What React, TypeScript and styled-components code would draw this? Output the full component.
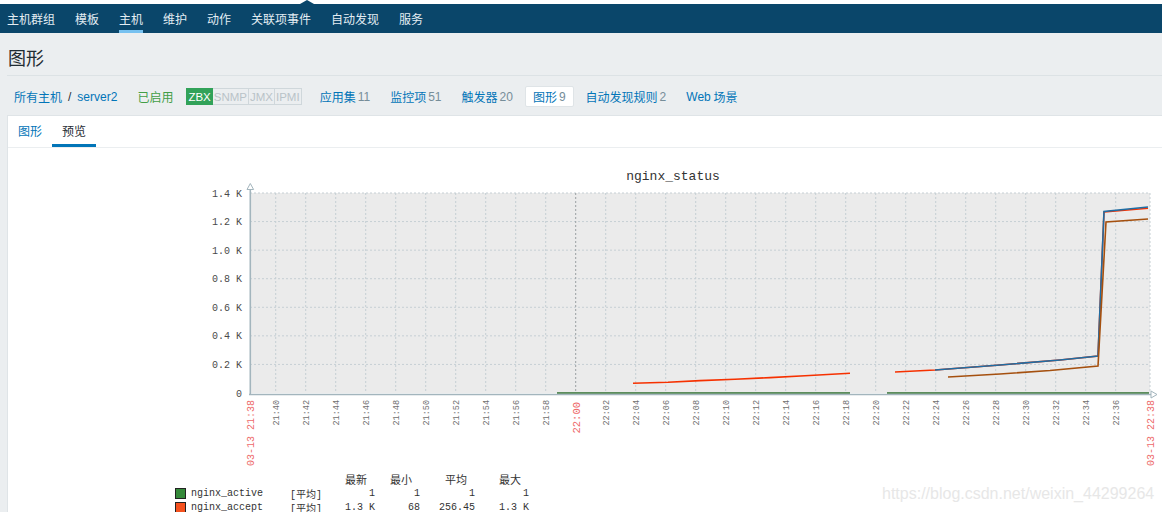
import React from 'react';
import styled, { createGlobalStyle } from 'styled-components';

const GlobalStyle = createGlobalStyle`
  html, body {
    margin: 0;
    padding: 0;
    background: #ebeef0;
    overflow: hidden;
  }
  body {
    font-family: "Liberation Sans", "Noto Sans CJK SC", sans-serif;
    font-size: 12px;
    color: #1f2c33;
  }
`;

const CJK = `"Noto Sans CJK SC", "Liberation Sans", sans-serif`;
const MONO = `"Liberation Mono", "Noto Sans CJK SC", monospace`;

const Page = styled.div`
  position: relative;
  width: 1162px;
  height: 512px;
  overflow: hidden;
`;

const TopStrip = styled.div`
  position: relative;
  height: 4px;
  background: #fff;

  &::after {
    content: '';
    position: absolute;
    left: 300px;
    bottom: 0;
    width: 0;
    height: 0;
    border-left: 7px solid transparent;
    border-right: 7px solid transparent;
    border-bottom: 4px solid #0a466a;
  }
`;

const Nav = styled.nav`
  display: flex;
  gap: 20px;
  height: 29px;
  padding-left: 7px;
  background: #0a466a;
`;

const NavItem = styled.span<{ $active?: boolean }>`
  position: relative;
  line-height: 29px;
  font-family: ${CJK};
  font-size: 12px;
  color: #e3edf3;

  &::after {
    content: '';
    display: ${(p) => (p.$active ? 'block' : 'none')};
    position: absolute;
    left: 0;
    right: 0;
    bottom: 0;
    height: 3px;
    background: #77c1f0;
  }
`;

const Header = styled.header`
  display: flex;
  align-items: center;
  height: 36px;
  padding-top: 6px;
  margin-left: 7px;
  border-bottom: 1px solid #dce2e5;
`;

const Title = styled.h1`
  margin: 0;
  padding-left: 1px;
  font-family: ${CJK};
  font-size: 18px;
  font-weight: normal;
  color: #1f2c33;
`;

const Crumbs = styled.div`
  display: flex;
  align-items: center;
  gap: 6px;
  height: 37px;
  padding: 2px 0 0 7px;
`;

const CrumbItem = styled.div<{ $selected?: boolean }>`
  display: flex;
  align-items: center;
  height: 19px;
  padding: 0 7px;
  background: ${(p) => (p.$selected ? '#fff' : 'transparent')};
  border: 1px solid ${(p) => (p.$selected ? '#dfe4e7' : 'transparent')};
  border-radius: 2px;
  margin: 0 -1px;
`;

const Link = styled.span`
  font-family: ${CJK};
  font-size: 12px;
  color: #0275b8;
`;

const Latin = styled.span`
  font-family: "Liberation Sans", sans-serif;
  font-size: 12px;
  color: #0275b8;
`;

const Sep = styled.span`
  margin: 0 6px;
  color: #1f2c33;
  font-family: "Liberation Sans", sans-serif;
`;

const Status = styled.span`
  font-family: ${CJK};
  font-size: 12px;
  color: #429e47;
`;

const Count = styled.span`
  margin-left: 2px;
  font-family: "Liberation Sans", sans-serif;
  font-size: 12px;
  color: #768d99;
`;

const BadgeGroup = styled.div`
  display: flex;
  padding: 0 5px 0 0;
`;

const Badge = styled.span<{ $on?: boolean }>`
  display: inline-flex;
  align-items: center;
  height: 15px;
  padding: 0 1px;
  border: 1px solid ${(p) => (p.$on ? '#31a259' : '#cfd7db')};
  background: ${(p) => (p.$on ? '#31a259' : 'transparent')};
  color: ${(p) => (p.$on ? '#fff' : '#b9c3c8')};
  font-family: "Liberation Sans", sans-serif;
  font-size: 11.5px;
  & + & {
    border-left: none;
  }
`;

const Content = styled.section`
  margin-left: 7px;
  background: #fff;
  border-top: 1px solid #dfe4e7;
  border-left: 1px solid #dfe4e7;
  height: 400px;
`;

const TabList = styled.div`
  display: flex;
  height: 31px;
  border-bottom: 1px solid #ebeef0;
`;

const Tab = styled.span<{ $active?: boolean }>`
  position: relative;
  display: flex;
  align-items: center;
  padding: 0 10px 3px;
  font-family: ${CJK};
  font-size: 12px;
  color: ${(p) => (p.$active ? '#1f2c33' : '#0275b8')};

  &::after {
    content: '';
    display: ${(p) => (p.$active ? 'block' : 'none')};
    position: absolute;
    left: 0;
    right: 0;
    bottom: 0;
    height: 3px;
    background: #0275b8;
  }
`;

const ChartSvg = styled.svg`
  display: block;
`;

const Legend = styled.div`
  display: grid;
  grid-template-columns: 16px 99px 33px 52px 45px 55px 54px;
  grid-auto-rows: 14px;
  margin-left: 167px;
  font-family: ${MONO};
  font-size: 10px;
  color: #333;
  align-items: center;
`;

const HeadCell = styled.span`
  font-family: ${CJK};
  font-size: 11px;
  text-align: right;
  padding-right: 8px;
`;

const Cell = styled.span<{ $right?: boolean }>`
  text-align: ${(p) => (p.$right ? 'right' : 'left')};
  white-space: pre;
`;

const Swatch = styled.span<{ $color: string }>`
  width: 9px;
  height: 9px;
  border: 1px solid #222;
  background: ${(p) => p.$color};
`;

const Watermark = styled.div`
  position: absolute;
  left: 882px;
  top: 485px;
  font-family: "Liberation Sans", sans-serif;
  font-size: 16px;
  line-height: 18px;
  color: #e7e7e7;
  pointer-events: none;
`;

const PLOT = { left: 250, right: 1150, top: 193, bottom: 393 };
const gridYs = [1400, 1200, 1000, 800, 600, 400, 200].map((v) => PLOT.bottom - (v / 1400) * 200);
const yLabels = ['1.4 K', '1.2 K', '1.0 K', '0.8 K', '0.6 K', '0.4 K', '0.2 K', '0'];
const gridXs = Array.from({ length: 29 }, (_, k) => 275.7 + 30 * k);

const timeLabel = (k: number) => {
  const m = 40 + 2 * k;
  const h = 21 + Math.floor(m / 60);
  return `${h}:${String(m % 60).padStart(2, '0')}`;
};

const series = [
  { color: '#2d6e2d', pts: ['557,393 850,393', '887,393 1149,393'] },
  {
    color: '#f63100',
    pts: [
      '633,383.3 668,382.3 700,380.6 735,379.2 770,377.6 805,375.8 850,373.3',
      '895,372 935,370 1000,365 1060,360 1098,356 1104,212 1148,208.3',
    ],
  },
  { color: '#1f6da3', pts: ['935,370 1000,365 1060,360 1098,356 1104,211.5 1148,207'] },
  { color: '#a5500f', pts: ['948,377 1000,374 1050,370.5 1098,366 1106,222 1148,219'] },
];

const Chart: React.FC = () => (
  <ChartSvg width={1154} height={324} viewBox="8 148 1154 324">
    <text x={673} y={180} textAnchor="middle" fontFamily={MONO} fontSize={13} fill="#333">
      nginx_status
    </text>
    <rect x={PLOT.left} y={PLOT.top} width={900} height={200} fill="#ebebeb" />
    {gridYs.map((y) => (
      <line key={y} x1={PLOT.left} x2={PLOT.right} y1={y} y2={y} stroke="#c6cfd4" strokeDasharray="2,2" />
    ))}
    {gridXs.map((x, k) => (
      <line
        key={x}
        x1={x}
        x2={x}
        y1={PLOT.top}
        y2={PLOT.bottom}
        stroke={k === 10 ? '#9aa0a3' : '#c6cfd4'}
        strokeDasharray="2,2"
      />
    ))}
    <line x1={PLOT.right} x2={PLOT.right} y1={PLOT.top} y2={PLOT.bottom} stroke="#c6cfd4" strokeDasharray="2,2" />

    {yLabels.map((t, i) => (
      <text
        key={t}
        x={242}
        y={PLOT.top + (i * 200) / 7 + 3.5}
        textAnchor="end"
        fontFamily={MONO}
        fontSize={10}
        fill="#4a4a4a"
      >
        {t}
      </text>
    ))}

    {gridXs.map((x, k) =>
      k === 10 ? null : (
        <text
          key={`l${k}`}
          transform={`translate(${x + 3}, 400) rotate(-90)`}
          textAnchor="end"
          fontFamily={MONO}
          fontSize={8.5}
          fill="#707070"
        >
          {timeLabel(k)}
        </text>
      )
    )}
    <text transform="translate(254, 400) rotate(-90)" textAnchor="end" fontFamily={MONO} fontSize={10} fill="#ee6a6a">
      03-13 21:38
    </text>
    <text transform="translate(579.5, 402) rotate(-90)" textAnchor="end" fontFamily={MONO} fontSize={10.5} fill="#ee6a6a">
      22:00
    </text>
    <text transform="translate(1154, 400) rotate(-90)" textAnchor="end" fontFamily={MONO} fontSize={10} fill="#ee6a6a">
      03-13 22:38
    </text>

    {series.map((s) =>
      s.pts.map((p) => <polyline key={p} points={p} fill="none" stroke={s.color} strokeWidth={1.6} />)
    )}

    <line x1={250.3} x2={250.3} y1={189} y2={395} stroke="#a3b5bd" strokeWidth={1.6} />
    <polygon points="247,189.5 253.6,189.5 250.3,183.5" fill="#fff" stroke="#a3b5bd" />
    <line x1={249} x2={1151} y1={394.5} y2={394.5} stroke="#a3b5bd" strokeWidth={1.4} />
    <polygon points="1151,391 1151,398 1157,394.5" fill="#fff" stroke="#a3b5bd" />
  </ChartSvg>
);

const legendRows = [
  { color: '#35893a', name: 'nginx_active', vals: ['1', '1', '1', '1'] },
  { color: '#f5511e', name: 'nginx_accept', vals: ['1.3 K', '68', '256.45', '1.3 K'] },
];

const App: React.FC = () => (
  <Page>
    <GlobalStyle />
    <TopStrip />
    <Nav>
      <NavItem>主机群组</NavItem>
      <NavItem>模板</NavItem>
      <NavItem $active>主机</NavItem>
      <NavItem>维护</NavItem>
      <NavItem>动作</NavItem>
      <NavItem>关联项事件</NavItem>
      <NavItem>自动发现</NavItem>
      <NavItem>服务</NavItem>
    </Nav>
    <Header>
      <Title>图形</Title>
    </Header>
    <Crumbs>
      <CrumbItem>
        <Link>所有主机</Link>
        <Sep>/</Sep>
        <Latin>server2</Latin>
      </CrumbItem>
      <CrumbItem>
        <Status>已启用</Status>
      </CrumbItem>
      <BadgeGroup>
        <Badge $on>ZBX</Badge>
        <Badge>SNMP</Badge>
        <Badge>JMX</Badge>
        <Badge>IPMI</Badge>
      </BadgeGroup>
      <CrumbItem>
        <Link>应用集</Link>
        <Count>11</Count>
      </CrumbItem>
      <CrumbItem>
        <Link>监控项</Link>
        <Count>51</Count>
      </CrumbItem>
      <CrumbItem>
        <Link>触发器</Link>
        <Count>20</Count>
      </CrumbItem>
      <CrumbItem $selected>
        <Link>图形</Link>
        <Count>9</Count>
      </CrumbItem>
      <CrumbItem>
        <Link>自动发现规则</Link>
        <Count>2</Count>
      </CrumbItem>
      <CrumbItem>
        <Latin>Web</Latin>
        <Link>&nbsp;场景</Link>
      </CrumbItem>
    </Crumbs>
    <Content>
      <TabList>
        <Tab>图形</Tab>
        <Tab $active>预览</Tab>
      </TabList>
      <Chart />
      <Legend>
        <span />
        <span />
        <span />
        <HeadCell>最新</HeadCell>
        <HeadCell>最小</HeadCell>
        <HeadCell>平均</HeadCell>
        <HeadCell>最大</HeadCell>
        {legendRows.map((r) => (
          <React.Fragment key={r.name}>
            <Swatch $color={r.color} />
            <Cell>{r.name}</Cell>
            <Cell>[平均]</Cell>
            {r.vals.map((v, i) => (
              <Cell key={i} $right>
                {v}
              </Cell>
            ))}
          </React.Fragment>
        ))}
      </Legend>
    </Content>
    <Watermark>https://blog.csdn.net/weixin_44299264</Watermark>
  </Page>
);

export default App;
